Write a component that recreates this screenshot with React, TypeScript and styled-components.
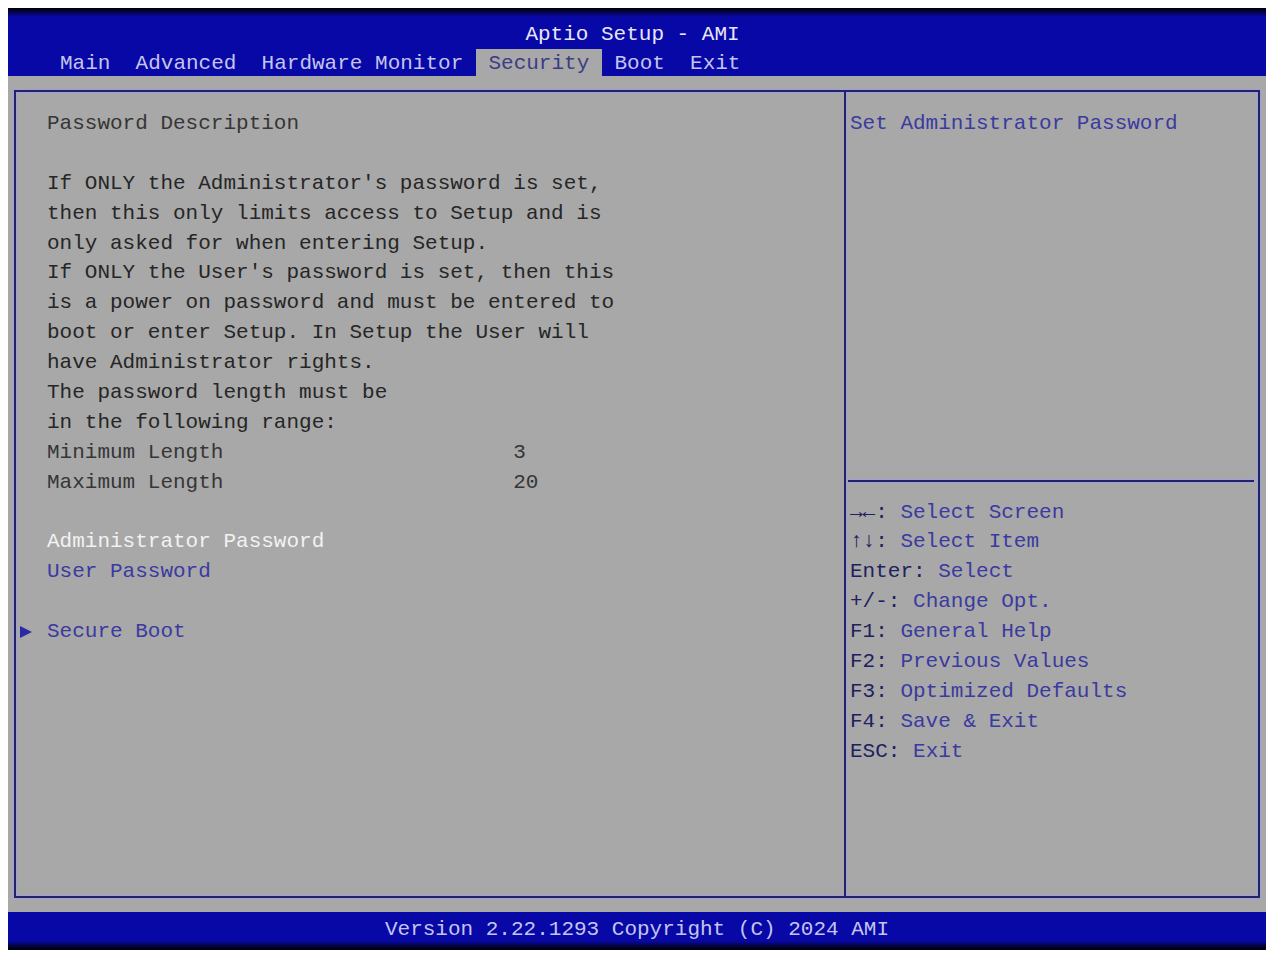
import styled, { createGlobalStyle } from 'styled-components'

const GlobalStyle = createGlobalStyle`
  html, body {
    margin: 0;
    padding: 0;
    background: #ffffff;
  }
`

const ROW = '29.9px'

const Screen = styled.div`
  margin: 8px 0 0 8px;
  width: 1258px;
  height: 942px;
  display: flex;
  flex-direction: column;
  font-family: 'Liberation Mono', 'DejaVu Sans Mono', monospace;
  font-size: 21px;
  background: #a8a8a8;
`

const Header = styled.div`
  height: 68px;
  box-sizing: border-box;
  padding-top: 12px;
  background: linear-gradient(to bottom, #000 0, #02023a 3px, #0808a6 9px, #0808a6 100%);
  display: flex;
  flex-direction: column;
`

const Title = styled.div`
  height: 29px;
  line-height: 29px;
  text-align: center;
  padding-right: 9px;
  color: #e6e6fa;
`

const Tabs = styled.div`
  display: flex;
  padding-left: 39.4px;
  height: 27px;
`

const Tab = styled.div<{ $active?: boolean }>`
  padding: 0 12.6px;
  line-height: 29px;
  white-space: pre;
  color: ${({ $active }) => ($active ? '#3c3c86' : '#c4c4ee')};
  background: ${({ $active }) => ($active ? '#a8a8a8' : 'transparent')};
`

const Body = styled.div`
  flex: 1;
  padding: 14px 6px;
  display: flex;
`

const Frame = styled.div`
  flex: 1;
  display: flex;
  border: 2px solid #22226a;
  box-shadow: 0 0 0 1px #a0a0d8, inset 0 0 0 1px #a0a0d8;
`

const LeftPane = styled.div`
  width: 830px;
  box-sizing: border-box;
  padding: 17px 0 0 31px;
  border-right: 2px solid #22226a;
  box-shadow: 1px 0 0 #a0a0d8;
`

const RightPane = styled.div`
  flex: 1;
  padding: 17px 0 0 4px;
  display: flex;
  flex-direction: column;
`

type Tone = 'text' | 'dim' | 'white' | 'blue'

const toneColor: Record<Tone, string> = {
  text: '#262626',
  dim: '#363636',
  white: '#f2f2f2',
  blue: '#3a3aa0',
}

const Line = styled.div<{ $tone?: Tone }>`
  height: ${ROW};
  line-height: ${ROW};
  white-space: pre;
  display: flex;
  align-items: center;
  color: ${({ $tone = 'text' }) => toneColor[$tone]};
`

const ValueRow = styled(Line)`
  display: grid;
  grid-template-columns: 37ch 1fr;
`

const Marker = styled.span`
  width: 0;
  height: 0;
  margin-left: -27px;
  margin-right: 15px;
  border-top: 6px solid transparent;
  border-bottom: 6px solid transparent;
  border-left: 12px solid #2a2aa6;
`

const Divider = styled.div`
  height: ${ROW};
  display: flex;
  align-items: center;
  padding-right: 4px;
  margin-left: -2px;
  margin-top: -2px;
  margin-bottom: 2px;

  &::after {
    content: '';
    flex: 1;
    height: 2px;
    background: #22226a;
    box-shadow: 0 1px 0 #a0a0d8, 0 -1px 0 #a0a0d8;
  }
`

const Key = styled.span`
  color: #20205e;
`

const Footer = styled.div`
  height: 38px;
  line-height: 36px;
  text-align: center;
  color: #c4c4ee;
  background: linear-gradient(to bottom, #0808a6 0, #0808a6 29px, #03033e 34px, #000 38px);
`

const tabs = ['Main', 'Advanced', 'Hardware Monitor', 'Security', 'Boot', 'Exit']

const description = [
  "If ONLY the Administrator's password is set,",
  'then this only limits access to Setup and is',
  'only asked for when entering Setup.',
  "If ONLY the User's password is set, then this",
  'is a power on password and must be entered to',
  'boot or enter Setup. In Setup the User will',
  'have Administrator rights.',
  'The password length must be',
  'in the following range:',
]

const help: [string, string][] = [
  ['→←:', ' Select Screen'],
  ['↑↓:', ' Select Item'],
  ['Enter:', ' Select'],
  ['+/-:', ' Change Opt.'],
  ['F1:', ' General Help'],
  ['F2:', ' Previous Values'],
  ['F3:', ' Optimized Defaults'],
  ['F4:', ' Save & Exit'],
  ['ESC:', ' Exit'],
]

const App = () => {
  return (
    <>
      <GlobalStyle />
      <Screen>
        <Header>
          <Title>Aptio Setup - AMI</Title>
          <Tabs>
            {tabs.map((t) => (
              <Tab key={t} $active={t === 'Security'}>
                {t}
              </Tab>
            ))}
          </Tabs>
        </Header>

        <Body>
          <Frame>
            <LeftPane>
              <Line $tone="dim">Password Description</Line>
              <Line />
              {description.map((d) => (
                <Line key={d}>{d}</Line>
              ))}
              <ValueRow $tone="dim">
                <span>Minimum Length</span>
                <span>3</span>
              </ValueRow>
              <ValueRow $tone="dim">
                <span>Maximum Length</span>
                <span>20</span>
              </ValueRow>
              <Line />
              <Line $tone="white">Administrator Password</Line>
              <Line $tone="blue">User Password</Line>
              <Line />
              <Line $tone="blue">
                <Marker />
                Secure Boot
              </Line>
            </LeftPane>

            <RightPane>
              <Line $tone="blue">Set Administrator Password</Line>
              {Array.from({ length: 11 }).map((_, i) => (
                <Line key={i} />
              ))}
              <Divider />
              {help.map(([k, v]) => (
                <Line key={k} $tone="blue">
                  <Key>{k}</Key>
                  {v}
                </Line>
              ))}
            </RightPane>
          </Frame>
        </Body>

        <Footer>Version 2.22.1293 Copyright (C) 2024 AMI</Footer>
      </Screen>
    </>
  )
}

export default App
